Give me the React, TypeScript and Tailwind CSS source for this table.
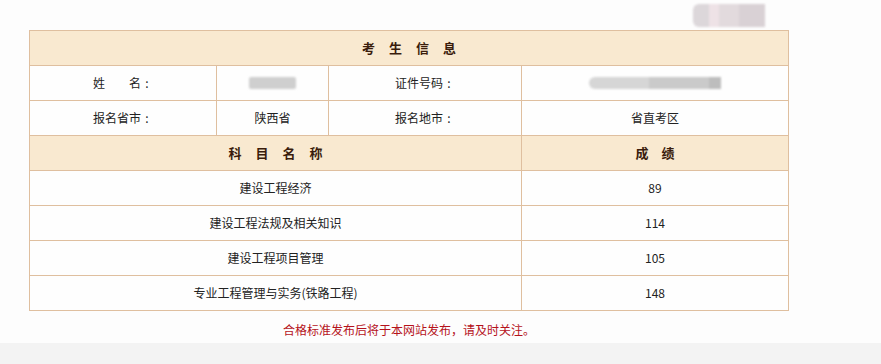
import React from "react";

const font = { fontFamily: '"Noto Sans CJK SC", "Noto Sans", sans-serif' };

function Spaced({ text, gap }: { text: string; gap: string }) {
  return (
    <span className={`inline-flex ${gap}`}>
      {text.split("").map((c, i) => (
        <span key={i}>{c}</span>
      ))}
    </span>
  );
}

// full-width colon with the dot pair centred in its box
function Colon() {
  return <span className="inline-block w-[12px] text-center">:</span>;
}

const cell =
  "flex items-center justify-center border-r border-b border-[#dfbf9f] h-[35px]";
const headCell = `${cell} bg-[#f9e9d0] text-[13px] font-bold text-[#3a1c0c]`;
const bodyCell = `${cell} bg-[#fefefe] text-[12px] text-[#222]`;

const subjects: [string, string][] = [
  ["建设工程经济", "89"],
  ["建设工程法规及相关知识", "114"],
  ["建设工程项目管理", "105"],
  ["专业工程管理与实务(铁路工程)", "148"],
];

export default function App() {
  return (
    <div className="w-[881px] h-[364px] bg-[#fdfdfd] flex flex-col" style={font}>
      <div className="flex-1 flex flex-col">
        {/* masked account badge */}
        <div className="h-[30px] relative">
          <div className="absolute left-[693px] top-[4px] w-[72px] h-[23px] rounded-l-[6px] overflow-hidden flex blur-[1px]">
            <div className="w-[16px] bg-[#dcd7da]" />
            <div className="w-[10px] bg-[#eee2e6]" />
            <div className="w-[20px] bg-[#e2dadd]" />
            <div className="flex-1 bg-[#d9d1d5]" />
          </div>
        </div>

        <div className="ml-[29px] w-[760px] border-l border-t border-[#dfbf9f]">
          <div className="grid grid-cols-[187px_112px_193px_267px]">
            <div className={`${headCell} col-span-4`}>
              <Spaced text="考生信息" gap="gap-[14px]" />
            </div>

            <div className={bodyCell}>
              <span className="inline-flex gap-[24px]">
                <span>姓</span>
                <span>
                  名<Colon />
                </span>
              </span>
            </div>
            <div className={bodyCell}>
              <div className="w-[47px] h-[12px] bg-[#cfcfcf] blur-[1px] rounded-[2px]" />
            </div>
            <div className={bodyCell}>
              <span>
                证件号码<Colon />
              </span>
            </div>
            <div className={bodyCell}>
              <div className="w-[132px] h-[12px] rounded-l-[6px] overflow-hidden flex blur-[1px]">
                <div className="w-[60px] bg-[#d6d6d6]" />
                <div className="w-[60px] bg-[#cacaca]" />
                <div className="flex-1 bg-[#bdbdbd]" />
              </div>
            </div>

            <div className={bodyCell}>
              <span>
                报名省市<Colon />
              </span>
            </div>
            <div className={bodyCell}>陕西省</div>
            <div className={bodyCell}>
              <span>
                报名地市<Colon />
              </span>
            </div>
            <div className={bodyCell}>省直考区</div>
          </div>

          <div className="grid grid-cols-[492px_267px]">
            <div className={headCell}>
              <Spaced text="科目名称" gap="gap-[14px]" />
            </div>
            <div className={headCell}>
              <Spaced text="成绩" gap="gap-[13px]" />
            </div>
            {subjects.map(([name, score]) => (
              <React.Fragment key={name}>
                <div className={bodyCell}>{name}</div>
                <div className={bodyCell}>{score}</div>
              </React.Fragment>
            ))}
          </div>
        </div>

        <div className="w-[818px] text-center text-[12px] text-[#b5121b] mt-[10px]">
          合格标准发布后将于本网站发布，请及时关注。
        </div>
      </div>
      <div className="h-[21px] bg-[#f3f3f3]" />
    </div>
  );
}
